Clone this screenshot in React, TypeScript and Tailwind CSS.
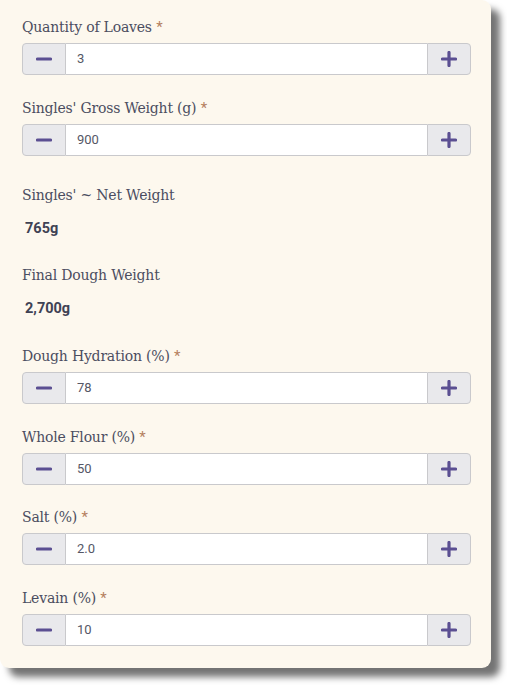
import React, { useState } from 'react';

type Field = { kind: 'input' | 'static'; label: string; value: string; mb: string };

// margins below each group, taken from the reference spacing
const fields: Field[] = [
  { kind: 'input', label: 'Quantity of Loaves', value: '3', mb: 'mb-[22px]' },
  { kind: 'input', label: "Singles' Gross Weight (g)", value: '900', mb: 'mb-[28px]' },
  { kind: 'static', label: "Singles' ~ Net Weight", value: '765g', mb: 'mb-[24px]' },
  { kind: 'static', label: 'Final Dough Weight', value: '2,700g', mb: 'mb-[25px]' },
  { kind: 'input', label: 'Dough Hydration (%)', value: '78', mb: 'mb-[22px]' },
  { kind: 'input', label: 'Whole Flour (%)', value: '50', mb: 'mb-[21px]' },
  { kind: 'input', label: 'Salt (%)', value: '2.0', mb: 'mb-[22px]' },
  { kind: 'input', label: 'Levain (%)', value: '10', mb: 'mb-0' },
];

const Minus = () => (
  <svg width="16" height="16" viewBox="0 0 16 16">
    <path d="M1.5 8h13" stroke="#5b4f92" strokeWidth="3.2" strokeLinecap="round" />
  </svg>
);

const Plus = () => (
  <svg width="16" height="16" viewBox="0 0 16 16">
    <path d="M1.5 8h13M8 1.5v13" stroke="#5b4f92" strokeWidth="3.2" strokeLinecap="round" />
  </svg>
);

const Stepper = ({ value }: { value: string }) => {
  const [val, setVal] = useState(value);
  return (
    <div className="flex h-[32px] w-full">
      <button className="flex w-[44px] items-center justify-center rounded-l-[4px] border border-[#c9c9cc] bg-[#e9e9ec]">
        <Minus />
      </button>
      <input
        value={val}
        onChange={(e) => setVal(e.target.value)}
        className="min-w-0 flex-1 border-y border-[#c9c9cc] bg-white px-[11px] text-[13px] text-[#555766] outline-none [font-family:Roboto,sans-serif]"
      />
      <button className="flex w-[44px] items-center justify-center rounded-r-[4px] border border-[#c9c9cc] bg-[#e9e9ec]">
        <Plus />
      </button>
    </div>
  );
};

const labelCls = "text-[14px] tracking-[-0.2px] leading-[22px] text-[#4b4d60] [font-family:'DejaVu_Serif',serif]";

const App: React.FC = () => {
  return (
    <div className="min-h-screen bg-white">
      <div className="w-[491px] rounded-r-[9px] rounded-bl-[9px] bg-[#fdf8ee] pl-[22px] pr-[20px] pt-[16px] pb-[22px] shadow-[9px_9px_7px_rgba(0,0,0,0.55)]">
        {fields.map((f) =>
          f.kind === 'input' ? (
            <div key={f.label} className={`flex flex-col gap-[5px] ${f.mb}`}>
              <label className={labelCls}>
                {f.label} <span className="text-[15px] text-[#b5805f] [font-family:Roboto,sans-serif]">*</span>
              </label>
              <Stepper value={f.value} />
            </div>
          ) : (
            <div key={f.label} className={`flex flex-col gap-[12px] ${f.mb}`}>
              <label className={labelCls}>{f.label}</label>
              <div className="pl-[3px] text-[14.5px] font-bold leading-[22px] text-[#3f4254] [font-family:Roboto,sans-serif]">
                {f.value}
              </div>
            </div>
          ),
        )}
      </div>
    </div>
  );
};

export default App;
